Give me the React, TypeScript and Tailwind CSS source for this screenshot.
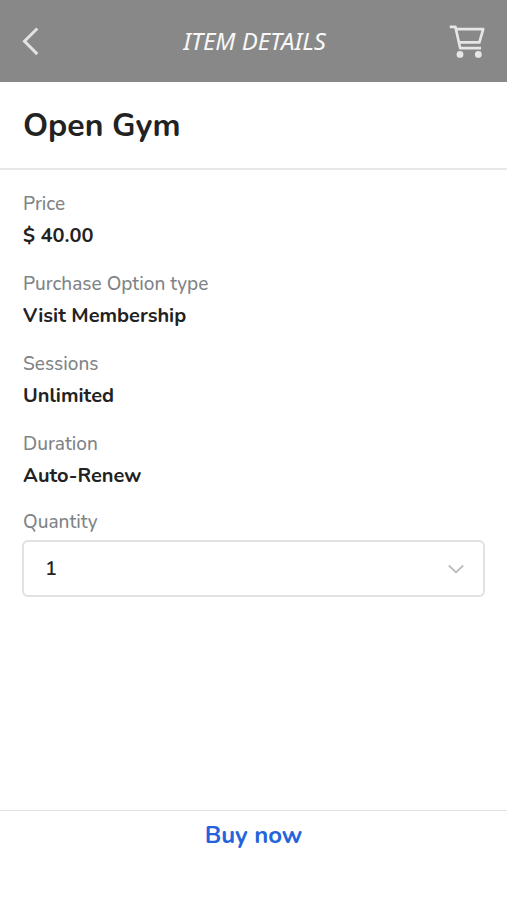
import { useState } from "react";

const details = [
  { label: "Price", value: "$ 40.00" },
  { label: "Purchase Option type", value: "Visit Membership" },
  { label: "Sessions", value: "Unlimited" },
  { label: "Duration", value: "Auto-Renew" },
];

function BackIcon() {
  return (
    <svg className="h-8 w-5" viewBox="0 0 20 32" fill="none" stroke="#e2e2e2" strokeWidth="3" aria-hidden="true">
      <path d="M15.3 3.5 2.5 16.3l12.8 12.8" />
    </svg>
  );
}

function CartIcon() {
  return (
    <svg className="h-9 w-10" viewBox="0 0 40 36" fill="none" stroke="#e6e6e6" strokeWidth="2.7" aria-hidden="true">
      <path d="M2.8 3.8h5.6l4.8 21.4h20.8" strokeLinejoin="round" />
      <path d="M8.8 6.2h27.4l-3.8 13.2H12" strokeLinejoin="round" />
      <circle cx="13" cy="31.4" r="3.4" fill="#e6e6e6" stroke="none" />
      <circle cx="31.3" cy="31.4" r="3.4" fill="#e6e6e6" stroke="none" />
    </svg>
  );
}

export default function App() {
  const [quantity, setQuantity] = useState("1");
  return (
    <div className="flex min-h-screen flex-col bg-white font-['Nunito','Noto_Sans',sans-serif] text-[#222222]">
      <header className="grid grid-cols-[1fr_auto_1fr] items-center bg-[#888888] pt-[23px] pr-5 pb-[23px] pl-[22px]">
        <button type="button" aria-label="Back" className="justify-self-start">
          <BackIcon />
        </button>
        <h1 className="font-['Noto_Sans',sans-serif] text-[24px] leading-9 text-[#f8f8f8] italic">ITEM DETAILS</h1>
        <button type="button" aria-label="Cart" className="justify-self-end">
          <CartIcon />
        </button>
      </header>

      <main className="flex-1">
        <h2 className="border-b-2 border-[#e8e8e8] px-[23px] pt-6 pb-[22px] text-[32px] leading-10 font-bold">
          Open Gym
        </h2>
        <div className="px-[22px] pt-[22px]">
          <dl className="flex flex-col gap-[22px] px-px">
            {details.map((item) => (
              <div key={item.label} className="flex flex-col gap-1.5">
                <dt className="text-[19px] leading-6 font-medium text-[#7f8487]">{item.label}</dt>
                <dd className="text-[20px] leading-7 font-bold">{item.value}</dd>
              </div>
            ))}
          </dl>
          <label htmlFor="quantity" className="mt-5 block px-px text-[19px] leading-6 font-medium text-[#7f8487]">
            Quantity
          </label>
          <div className="mt-1.5 grid items-center">
            <select
              id="quantity"
              value={quantity}
              onChange={(e) => setQuantity(e.target.value)}
              className="col-start-1 row-start-1 h-[57px] w-full appearance-none rounded-md border-2 border-[#dfe1e2] bg-white px-[21px] text-[20px] font-semibold"
            >
              <option>1</option>
              <option>2</option>
              <option>3</option>
              <option>4</option>
              <option>5</option>
            </select>
            <svg
              className="pointer-events-none col-start-1 row-start-1 mr-[21px] h-3 w-4 justify-self-end"
              viewBox="0 0 16 12"
              fill="none"
              stroke="#b9bbbc"
              strokeWidth="1.8"
              aria-hidden="true"
            >
              <path d="M.8 2.5 8 9.3l7.2-6.8" />
            </svg>
          </div>
        </div>
      </main>

      <footer className="border-t border-[#e0e0e0] pt-1.5 pb-[47px] text-center">
        <button type="button" className="text-[24px] leading-9 font-bold text-[#2563dc]">
          Buy now
        </button>
      </footer>
    </div>
  );
}
